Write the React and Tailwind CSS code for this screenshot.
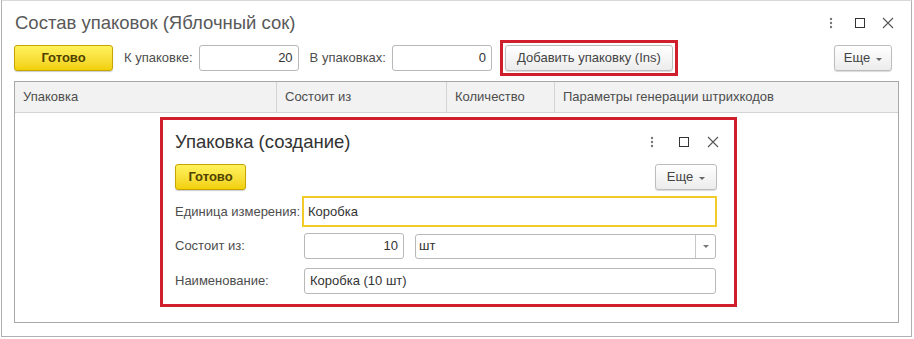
import React from "react";

const font = { fontFamily: '"Liberation Sans", Arial, sans-serif' };

function YellowButton({ className = "" }) {
  return (
    <button
      className={`h-[26px] rounded-[3px] border border-[#c5a500] bg-gradient-to-b from-[#fff25a] to-[#f2d000] text-[13px] font-bold text-[#4f4200] shadow-[0_1px_1px_rgba(0,0,0,0.2)] ${className}`}
    >
      Готово
    </button>
  );
}

function GrayButton({ children, className = "" }) {
  return (
    <button
      className={`h-[26px] rounded-[3px] border border-[#bdbdbd] bg-gradient-to-b from-white to-[#ececec] text-[13px] text-[#444] shadow-[0_1px_1px_rgba(0,0,0,0.15)] ${className}`}
    >
      {children}
    </button>
  );
}

function MoreButton({ className = "" }) {
  return (
    <GrayButton className={`flex items-center justify-center gap-[6px] ${className}`}>
      <span>Еще</span>
      <span className="mt-[2px] border-x-[3px] border-t-[3px] border-x-transparent border-t-[#666]" />
    </GrayButton>
  );
}

// ⋮ □ × in the window caption
function WindowIcons({ className = "", gap1 = "ml-[25px]", gap2 = "ml-[18px]" }) {
  return (
    <div className={`flex items-center ${className}`}>
      <svg width="4" height="12" viewBox="0 0 4 12">
        <circle cx="2" cy="2" r="1.2" fill="#777" />
        <circle cx="2" cy="6" r="1.2" fill="#777" />
        <circle cx="2" cy="10" r="1.2" fill="#777" />
      </svg>
      <svg className={gap1} width="10" height="10" viewBox="0 0 10 10">
        <rect x="0.5" y="0.5" width="9" height="9" fill="none" stroke="#333" strokeWidth="1" />
      </svg>
      <svg className={gap2} width="12" height="12" viewBox="0 0 12 12">
        <path d="M1 1 L11 11 M11 1 L1 11" stroke="#555" strokeWidth="1.1" />
      </svg>
    </div>
  );
}

function Field({ value, align = "left", className = "" }) {
  return (
    <div
      className={`flex h-[26px] items-center rounded-[3px] border border-[#b8b8b8] bg-white px-[5px] text-[13px] text-[#333] ${
        align === "right" ? "justify-end" : ""
      } ${className}`}
    >
      {value}
    </div>
  );
}

function PackDialog() {
  return (
    <div className="absolute left-[160px] top-[117px] h-[190px] w-[577px] border-[3px] border-[#cf1f2d] bg-white">
      <div className="flex h-[44px] items-center pl-[12px] pr-[15px]">
        <span className="text-[18.5px] text-[#333]">Упаковка (создание)</span>
        <WindowIcons className="ml-auto" />
      </div>
      <div className="flex items-center pl-[12px] pr-[17px]">
        <YellowButton className="w-[71px] h-[25px]" />
        <MoreButton className="ml-auto w-[62px]" />
      </div>
      <div className="mt-[6px] flex items-center pl-[12px] pr-[17px]">
        <span className="w-[127px] text-[13px] text-[#4d4d4d]">Единица измерения:</span>
        <div className="flex h-[31px] flex-1 items-center border-2 border-[#f0cb2a] bg-white px-[4px] text-[13px] text-[#333]">
          Коробка
        </div>
      </div>
      <div className="mt-[6px] flex items-center pl-[12px] pr-[18px]">
        <span className="w-[129px] text-[13px] text-[#4d4d4d]">Состоит из:</span>
        <Field value="10" align="right" className="w-[100px] h-[25px]" />
        <div className="ml-[11px] flex h-[25px] flex-1 items-center rounded-[3px] border border-[#b8b8b8] bg-white text-[13px] text-[#333]">
          <span className="flex-1 px-[3px]">шт</span>
          <span className="flex h-full w-[20px] items-center justify-center border-l border-[#c8c8c8]">
            <span className="border-x-[3px] border-t-[3px] border-x-transparent border-t-[#777]" />
          </span>
        </div>
      </div>
      <div className="mt-[9px] flex items-center pl-[12px] pr-[18px]">
        <span className="w-[129px] text-[13px] text-[#4d4d4d]">Наименование:</span>
        <Field value="Коробка (10 шт)" className="flex-1 h-[25px] px-[3px]" />
      </div>
    </div>
  );
}

export default function App() {
  const columns = [
    { label: "Упаковка", w: "w-[262px]" },
    { label: "Состоит из", w: "w-[170px]" },
    { label: "Количество", w: "w-[108px]" },
    { label: "Параметры генерации штрихкодов", w: "flex-1" },
  ];

  return (
    <div style={font} className="relative h-[339px] w-[914px] overflow-hidden bg-white">
      <div className="ml-[1px] flex h-[337px] w-[911px] flex-col border-x border-b border-t border-[#b0b0b0] border-t-[#d8d8d8] bg-white">
        {/* Title */}
        <div className="flex h-[42px] items-center pl-[13px] pr-[17px] pt-[1px]">
          <span className="text-[18.5px] text-[#595959]">Состав упаковок (Яблочный сок)</span>
          <WindowIcons className="ml-auto" gap1="ml-[22px]" gap2="ml-[17px]" />
        </div>

        {/* Toolbar */}
        <div className="flex h-[29px] items-center pl-[12px] pr-[19px] pt-[1px]">
          <YellowButton className="w-[99px]" />
          <span className="ml-[11px] text-[13px] text-[#4d4d4d]">К упаковке:</span>
          <Field value="20" align="right" className="ml-[6px] w-[100px]" />
          <span className="ml-[11px] text-[13px] text-[#4d4d4d]">В упаковках:</span>
          <Field value="0" align="right" className="ml-[6px] w-[100px]" />
          <div className="ml-[8px] border-[3px] border-[#cf1f2d] p-[2px]">
            <GrayButton className="h-[24px] w-[168px] px-[8px]">Добавить упаковку (Ins)</GrayButton>
          </div>
          <MoreButton className="ml-auto w-[58px]" />
        </div>

        {/* Table */}
        <div className="mx-[12px] mt-[9px] flex h-[242px] flex-col border border-[#a8a8a8]">
          <div className="flex h-[31px] border-b border-[#d4d4d4] bg-[#f2f2f2]">
            {columns.map((c, i) => (
              <div
                key={c.label}
                className={`flex items-center px-[8px] text-[13px] text-[#4d4d4d] ${c.w} ${
                  i < columns.length - 1 ? "border-r border-[#d4d4d4]" : ""
                }`}
              >
                {c.label}
              </div>
            ))}
          </div>
          <div className="flex-1 bg-white" />
        </div>
      </div>

      <PackDialog />
    </div>
  );
}
